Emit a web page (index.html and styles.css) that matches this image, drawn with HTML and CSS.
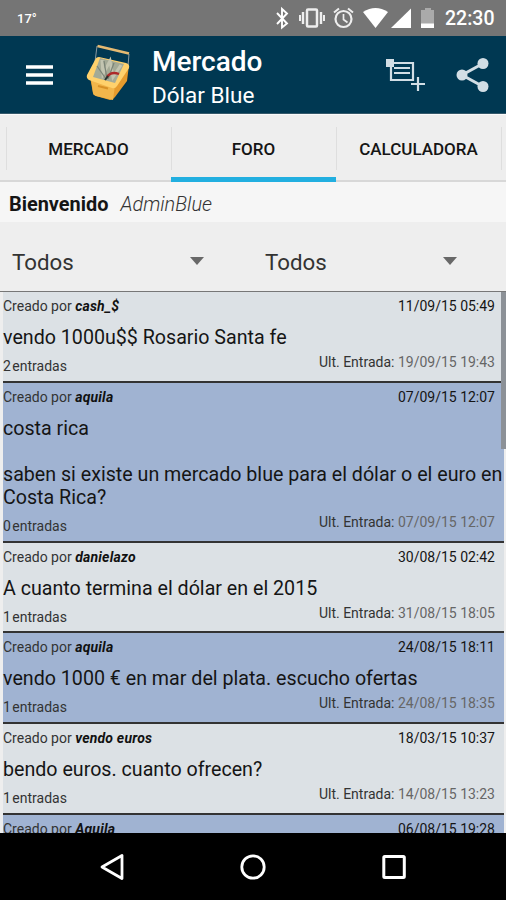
FILE: index.html
```html
<!DOCTYPE html>
<html lang="es">
<head>
    <meta charset="UTF-8">
    <meta name="viewport" content="width=device-width, initial-scale=1.0">
    <title>Mercado - Dólar Blue</title>
    <link rel="stylesheet" href="styles.css">
</head>
<body>
    <div class="status-bar">
        <span class="temp">17°</span>
        <svg class="status-icons" width="160" height="36" viewBox="0 0 160 36">
            <path d="M3 13l10 10.500-5 4V9l5 4.500L3 24" fill="none" stroke="#fff" stroke-width="1.900"/>
            <g fill="none" stroke="#eee">
                <rect x="33" y="9.500" width="10" height="17" rx="1" stroke-width="2.500"/>
                <path d="M29 12v12M47 12v12" stroke-width="2.400"/>
                <path d="M26 15v6M50 15v6" stroke-width="2"/>
                <circle cx="69.500" cy="19" r="8" stroke-width="2.200"/>
                <path d="M69.500 14v5.500l4 3" stroke-width="1.700"/>
                <path d="M60 12.500l5-4M79 12.500l-5-4" stroke-width="2"/>
            </g>
            <path d="M89 12q12.500-8 25 0L101.500 28z" fill="#fff"/>
            <path d="M137 8.500V28h-20z" fill="#fff"/>
            <path d="M148 10h4V8h6v2h4v18h-14z" fill="#aaa" transform="translate(-1 0)"/>
            <path d="M147 23.500h14V28h-14z" fill="#fff"/>
        </svg>
        <span class="clock">22:30</span>
    </div>

    <header class="app-bar">
        <svg class="menu-icon" width="27" height="20" viewBox="0 0 27 20">
            <path d="M0 2h27M0 10h27M0 18h27" stroke="#fff" stroke-width="3.600"/>
        </svg>
        <svg class="logo" width="48" height="60" viewBox="0 0 48 60">
            <path d="M28 55L45 37l-2-9-17 23z" fill="#072c3c" opacity=".5"/>
            <path d="M10 19l2-16M44 11l-1 12" fill="none" stroke="#8998a0" stroke-width="1"/>
            <path d="M12.500 3L44 10.500" stroke="#e5ba72" stroke-width="2.500"/>
            <path d="M5 34l3 16q0 2 3 3l14 4q3 0 5-3l12-16 2-16-16 21z" fill="#e69b2d"/>
            <path d="M6 36l24 6-2 15-17-4q-3-1-3-3z" fill="#f2b64b"/>
            <path d="M14 14l27 6q4 1 3 5L32 43q-2 3-5 2L4 37q-3-2-2-5l8-15q1-3 4-3z" fill="#ffd16c"/>
            <path d="M15 15l24 6-9 19-22-6z" fill="#a4aa96"/>
            <path d="M17 17l1 14 7-13 3 16 8-12" fill="none" stroke="#c3c5b1" stroke-width="3"/>
            <path d="M19 18l3 18M12 23l9 13M29 20l-6 16" fill="none" stroke="#7c8578" stroke-width="1.300"/>
            <path d="M22 34q4-6 12-3" fill="none" stroke="#ad2929" stroke-width="2.300"/>
            <path d="M20 37l3-4" stroke="#26342f" stroke-width="2"/>
            <path d="M13 43l10 2.500" stroke="#d89127" stroke-width="2"/>
        </svg>
        <div class="titles">
            <h1>Mercado</h1>
            <h2>Dólar Blue</h2>
        </div>
        <svg class="add-icon" width="40" height="34" viewBox="0 0 40 34">
            <g fill="none" stroke="#d2dee5">
                <path d="M5 5h22v17H5z" stroke-width="2.200"/>
                <path d="M8 10h16M8 15h16" stroke-width="1.800"/>
                <path d="M32 19v14M25 26h14" stroke-width="2.200"/>
            </g>
            <path d="M0 1h8v8H0z" fill="#d2dee5"/>
        </svg>
        <svg class="share-icon" width="33" height="34" viewBox="0 0 33 34">
            <path d="M27 5.500L6 17l21 11.500" fill="none" stroke="#d2dee5" stroke-width="3"/>
            <g fill="#d2dee5">
                <circle cx="27" cy="5.500" r="5.500"/>
                <circle cx="6" cy="17" r="5.500"/>
                <circle cx="27" cy="28.500" r="5.500"/>
            </g>
        </svg>
    </header>

    <nav class="tabs">
        <div class="tab"><span>MERCADO</span></div>
        <div class="tab active"><span>FORO</span></div>
        <div class="tab"><span>CALCULADORA</span></div>
        <div class="tab-end"></div>
    </nav>

    <div class="welcome"><b>Bienvenido</b><i>AdminBlue</i></div>

    <div class="filters">
        <div class="select">Todos<span class="arrow"></span></div>
        <div class="select">Todos<span class="arrow"></span></div>
    </div>

    <main class="posts">
        <article class="post">
            <div class="post-head"><span>Creado por <b>cash_$</b></span><time>11/09/15 05:49</time></div>
            <p>vendo 1000u$$ Rosario Santa fe</p>
            <div class="post-foot"><span class="count">2 entradas</span><span class="last">Ult. Entrada: <time>19/09/15 19:43</time></span></div>
        </article>
        <article class="post blue">
            <div class="post-head"><span>Creado por <b>aquila</b></span><time>07/09/15 12:07</time></div>
            <p>costa rica<br><br>saben si existe un mercado blue para el dólar o el euro en<br>Costa Rica?</p>
            <div class="post-foot"><span class="count">0 entradas</span><span class="last">Ult. Entrada: <time>07/09/15 12:07</time></span></div>
        </article>
        <article class="post">
            <div class="post-head"><span>Creado por <b>danielazo</b></span><time>30/08/15 02:42</time></div>
            <p>A cuanto termina el dólar en el 2015</p>
            <div class="post-foot"><span class="count">1 entradas</span><span class="last">Ult. Entrada: <time>31/08/15 18:05</time></span></div>
        </article>
        <article class="post blue">
            <div class="post-head"><span>Creado por <b>aquila</b></span><time>24/08/15 18:11</time></div>
            <p>vendo 1000 € en mar del plata. escucho ofertas</p>
            <div class="post-foot"><span class="count">1 entradas</span><span class="last">Ult. Entrada: <time>24/08/15 18:35</time></span></div>
        </article>
        <article class="post">
            <div class="post-head"><span>Creado por <b>vendo euros</b></span><time>18/03/15 10:37</time></div>
            <p>bendo euros. cuanto ofrecen?</p>
            <div class="post-foot"><span class="count">1 entradas</span><span class="last">Ult. Entrada: <time>14/08/15 13:23</time></span></div>
        </article>
        <article class="post blue">
            <div class="post-head"><span>Creado por <b>Aquila</b></span><time>06/08/15 19:28</time></div>
        </article>
        <div class="scrollbar"></div>
    </main>

    <footer class="nav-bar">
        <svg width="26" height="28" viewBox="0 0 26 28">
            <path d="M23 2.500v23L3 14z" fill="none" stroke="#fff" stroke-width="2.800" stroke-linejoin="round"/>
        </svg>
        <svg width="26" height="28" viewBox="0 0 26 28">
            <circle cx="13" cy="14" r="11.200" fill="none" stroke="#fff" stroke-width="2.800"/>
        </svg>
        <svg width="26" height="28" viewBox="0 0 26 28">
            <rect x="2.800" y="3.500" width="20.500" height="21" rx="1" fill="none" stroke="#fff" stroke-width="3"/>
        </svg>
    </footer>
</body>
</html>
```
FILE: styles.css
```css
* {
    box-sizing: border-box;
}
body {
    margin: 0;
    width: 506px;
    height: 900px;
    display: flex;
    flex-direction: column;
    overflow: hidden;
    background: #eee;
    color: #151515;
    font-family: Roboto, sans-serif;
}
.status-bar {
    height: 36px;
    flex: none;
    display: flex;
    align-items: center;
    padding: 0 11px 0 17px;
    background: #757575;
    color: #fff;
}
.temp {
    font-size: 13px;
    font-weight: 500;
}
.status-icons {
    margin-left: auto;
    margin-right: 10px;
}
.clock {
    width: 51px;
    font-size: 19.500px;
    font-weight: 500;
    line-height: 36px;
    padding: 2px 0 0 1px;
}
.app-bar {
    height: 78px;
    flex: none;
    display: flex;
    align-items: center;
    padding: 0 17px 0 26px;
    background: #003852;
    border-bottom: 1px solid #35596b;
    color: #fff;
}
.logo {
    margin: 0 0 3px 32px;
}
.titles {
    margin-left: 19px;
    padding-top: 6px;
}
h1, h2 {
    margin: 0;
    white-space: nowrap;
}
h1 {
    font-size: 28px;
    line-height: 35px;
    font-weight: 500;
}
h2 {
    font-size: 22.500px;
    line-height: 32px;
    font-weight: 400;
}
.add-icon {
    margin-left: auto;
    margin-right: 30px;
}
.tabs {
    height: 68px;
    flex: none;
    display: flex;
    border-top: 1px solid #fafafa;
    background: #eee;
}
.tab {
    width: 165px;
    display: flex;
    align-items: center;
    justify-content: center;
    border-bottom: 2px solid #d8d8d8;
    background: linear-gradient(#dedede, #dedede) 0 12px / 1px 43px no-repeat;
    font-size: 17px;
    font-weight: 500;
    padding-top: 3px;
}
.tab:first-child {
    width: 171px;
    padding-left: 6px;
    background-position: 6px 12px;
}
.tab.active {
    border-bottom: 5px solid #22afe0;
    padding-top: 6px;
}
.tab-end {
    width: 5px;
    border-bottom: 2px solid #d8d8d8;
    background: linear-gradient(#dedede, #dedede) 0 12px / 1px 43px no-repeat;
}
.welcome {
    height: 40px;
    flex: none;
    padding-left: 9px;
    background: #f6f6f6;
    font-size: 19.900px;
    line-height: 46px;
}
.welcome b {
    font-weight: 700;
}
.welcome i {
    margin-left: 12px;
    font-weight: 300;
    color: #333;
}
.filters {
    height: 69px;
    flex: none;
    display: flex;
    padding: 11px 0 0 12px;
}
.select {
    width: 253px;
    height: 57px;
    flex: none;
    display: flex;
    align-items: center;
    justify-content: space-between;
    padding-right: 61px;
    font-size: 22.300px;
    color: #333;
}
.select:last-child {
    width: 241px;
    padding-right: 49px;
}
.arrow {
    border: 7px solid transparent;
    border-top: 8px solid #686868;
    border-bottom: 0;
    margin-bottom: 1px;
}
.posts {
    position: relative;
    flex: 1;
    min-height: 0;
    overflow: hidden;
    padding: 0 2px 0 3px;
    border-top: 1px solid #777;
}
.post {
    height: 90.800px;
    padding: 6px 9px 0 0;
    background: #dce1e5;
    border-bottom: 2px solid #333;
}
.post.blue {
    background: #a0b3d2;
}
.post:nth-child(2) {
    height: 159.800px;
}
.post-head, .post-foot {
    display: flex;
    justify-content: space-between;
    font-size: 14px;
    line-height: 17px;
}
.post p {
    margin: 11px -9px 9px 0;
    font-size: 19.650px;
    line-height: 23px;
    white-space: nowrap;
}
.post-head > span, .count, .last {
    color: #333;
}
.post-head b {
    font-style: italic;
    letter-spacing: 0.200px;
    color: #111;
}
.count {
    word-spacing: -2px;
}
.last {
    margin-top: -4px;
}
.last time {
    color: #666;
}
.scrollbar {
    position: absolute;
    top: 0;
    right: 0;
    width: 5px;
    height: 157px;
    background: #8c9197;
}
.nav-bar {
    height: 67px;
    flex: none;
    display: flex;
    align-items: center;
    justify-content: center;
    gap: 115px;
    background: #000;
}
```
